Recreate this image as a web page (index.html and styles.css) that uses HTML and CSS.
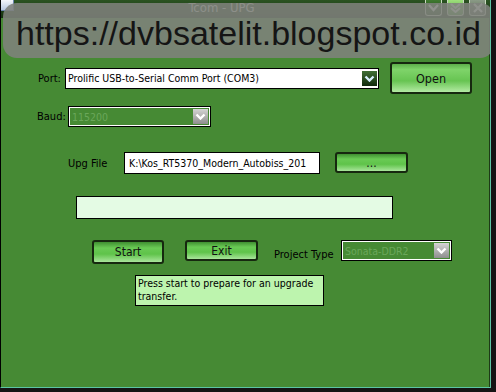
FILE: index.html
```html
<!DOCTYPE html>
<html lang="en">

<head>
    <meta charset="UTF-8">
    <title>Tcom - UPG</title>
    <link rel="stylesheet" href="styles.css">
</head>

<body>

    <div class="window">
        <div class="titlebar">
            <span class="sys-icon"></span>
            <span class="title">Tcom - UPG</span>
            <div class="caption-btns">
                <span class="cap cap-min">
                    <svg width="11" height="8" viewBox="0 0 11 8"><polyline points="1,1 5.5,6 10,1" fill="none" stroke="#fff" stroke-width="2.2"/></svg>
                </span>
                <span class="cap cap-max">
                    <svg width="11" height="10" viewBox="0 0 11 10"><polyline points="1,1 5.5,5 10,1" fill="none" stroke="#fff" stroke-width="2"/><polyline points="1,5 5.5,9 10,5" fill="none" stroke="#fff" stroke-width="2"/></svg>
                </span>
                <span class="cap cap-close">
                    <svg width="10" height="10" viewBox="0 0 10 10"><path d="M1 1 L9 9 M9 1 L1 9" stroke="#fff" stroke-width="2.2"/></svg>
                </span>
            </div>
        </div>

        <div class="content">
            <div class="row row-port">
                <label class="lbl lbl-port">Port:</label>
                <div class="combo combo-port">
                    <span class="combo-text">Prolific USB-to-Serial Comm Port (COM3)</span>
                    <span class="drop drop-dark">
                        <svg width="11" height="7" viewBox="0 0 11 7"><polyline points="1.5,1.5 5.5,5.5 9.5,1.5" fill="none" stroke="#d8f0ff" stroke-width="2.4"/></svg>
                    </span>
                </div>
                <button class="gbtn btn-open">Open</button>
            </div>

            <div class="row row-baud">
                <label class="lbl lbl-baud">Baud:</label>
                <div class="combo combo-off combo-baud">
                    <span class="combo-text">115200</span>
                    <span class="drop drop-gray">
                        <svg width="11" height="7" viewBox="0 0 11 7"><polyline points="1.5,1.5 5.5,5.5 9.5,1.5" fill="none" stroke="#fff" stroke-width="2.4"/></svg>
                    </span>
                </div>
            </div>

            <div class="row row-file">
                <label class="lbl lbl-file">Upg File</label>
                <div class="textbox">K:\Kos_RT5370_Modern_Autobiss_201</div>
                <button class="gbtn btn-browse">...</button>
            </div>

            <div class="row row-progress">
                <div class="progress"></div>
            </div>

            <div class="row row-actions">
                <button class="gbtn btn-start">Start</button>
                <button class="gbtn btn-exit">Exit</button>
                <label class="lbl lbl-type">Project Type</label>
                <div class="combo combo-off combo-type">
                    <span class="combo-text">Sonata-DDR2</span>
                    <span class="drop drop-gray">
                        <svg width="11" height="7" viewBox="0 0 11 7"><polyline points="1.5,1.5 5.5,5.5 9.5,1.5" fill="none" stroke="#fff" stroke-width="2.4"/></svg>
                    </span>
                </div>
            </div>

            <div class="row row-msg">
                <div class="message">Press start to prepare for an upgrade transfer.</div>
            </div>
        </div>

        <div class="watermark">https://dvbsatelit.blogspot.co.id</div>
    </div>

</body>

</html>
```

FILE: styles.css
```css
body {
    margin: 0;
    padding: 0;
    background-color: #141414;
    font-family: "DejaVu Sans Condensed", "Liberation Sans", sans-serif;
    font-size: 11px;
    color: #000;
}

.window {
    position: relative;
    width: 489px;
    height: 387px;
    background-color: #468a34;
    border-left: 1px solid #000;
    border-right: 1px solid #5cc4a4;
    border-bottom: 1px solid #5cc4a4;
    box-shadow: inset -1px 0 0 #1d3a16;
    overflow: hidden;
}

.titlebar {
    height: 18px;
    display: flex;
    align-items: flex-start;
    background: linear-gradient(#2b5322, #15300f);
}

.sys-icon {
    width: 12px;
    height: 10px;
    background: linear-gradient(#f4f6fa, #b8c8e0);
    border-right: 1px solid #6d86b0;
    border-bottom: 1px solid #6d86b0;
}

.title {
    flex: 1;
    text-align: center;
    color: #e8eee6;
    font-size: 13px;
    line-height: 16px;
    padding-left: 4px;
}

.caption-btns {
    display: flex;
    gap: 5px;
    margin-right: 4px;
}

.cap {
    width: 17px;
    height: 16px;
    box-sizing: border-box;
    border: 1px solid #c8d8c0;
    border-top: none;
    border-radius: 0 0 3px 3px;
    display: flex;
    align-items: center;
    justify-content: center;
}

.cap-min {
    background: linear-gradient(#3f7a30, #1c4314);
}

.cap-max {
    background: linear-gradient(#9ee07c, #4fa03a);
}

.cap-close {
    background: linear-gradient(#8a9a86, #56664f);
}

.content {
    display: flex;
    flex-direction: column;
}

.row {
    display: flex;
    align-items: center;
}

.lbl {
    white-space: nowrap;
}

/* combo boxes */
.combo {
    box-sizing: border-box;
    display: flex;
    align-items: center;
    justify-content: space-between;
    border: 1px solid #000;
    padding: 1px 1px 1px 2px;
}

.combo-text {
    white-space: nowrap;
    overflow: hidden;
    font-size: 10.5px;
}

.combo-port {
    width: 314px;
    height: 21px;
    background-color: #fff;
}

.combo-off {
    background-color: #468a34;
    border: 1px solid #000;
    box-shadow: inset 0 0 0 1px #fff;
    padding: 2px 2px 2px 3px;
}

.combo-off .combo-text {
    color: #6aa75a;
}

.drop {
    width: 15px;
    height: 15px;
    flex-shrink: 0;
    display: flex;
    align-items: center;
    justify-content: center;
}

.drop-dark {
    background: linear-gradient(#3f6e35, #122a0d);
}

.drop-gray {
    background: linear-gradient(#d4d4d4, #8e8e8e);
}

/* glossy green buttons */
.gbtn {
    box-sizing: border-box;
    font-family: inherit;
    font-size: 12px;
    color: #111;
    border: 2px solid #16280f;
    border-radius: 3px;
    padding: 0;
    background: linear-gradient(#3f8f31 0%, #6acb55 30%, #5fc34a 60%, #a9e59b 100%);
    cursor: pointer;
}

.row-port {
    margin-top: 44px;
    padding-left: 37px;
}

.lbl-port {
    width: 27px;
}

.btn-open {
    margin-left: 11px;
    width: 82px;
    height: 32px;
    font-size: 12.5px;
    background: linear-gradient(#5dae4a 0%, #7fd46a 20%, #67c452 60%, #b3eaa3 100%);
}

.row-baud {
    margin-top: 12px;
    padding-left: 36px;
}

.lbl-baud {
    width: 31px;
}

.combo-baud {
    width: 143px;
    height: 21px;
}

.row-file {
    margin-top: 25px;
    padding-left: 67px;
}

.lbl-file {
    width: 56px;
}

.textbox {
    box-sizing: border-box;
    width: 196px;
    height: 22px;
    line-height: 20px;
    padding-left: 4px;
    background-color: #fff;
    border: 1px solid #000;
    white-space: nowrap;
    overflow: hidden;
    font-size: 10.5px;
}

.btn-browse {
    margin-left: 15px;
    margin-bottom: 1px;
    width: 73px;
    height: 21px;
}

.row-progress {
    margin-top: 22px;
    padding-left: 75px;
}

.progress {
    box-sizing: border-box;
    width: 317px;
    height: 23px;
    background-color: #e4fbe4;
    border: 1px solid #000;
}

.row-actions {
    margin-top: 21px;
    padding-left: 91px;
    align-items: flex-start;
}

.btn-start {
    width: 72px;
    height: 24px;
}

.btn-exit {
    margin-left: 21px;
    width: 73px;
    height: 21px;
}

.lbl-type {
    margin-left: 16px;
    width: 67px;
    padding-top: 8px;
}

.combo-type {
    width: 111px;
    height: 21px;
}

.row-msg {
    margin-top: 11px;
    padding-left: 134px;
}

.message {
    box-sizing: border-box;
    width: 189px;
    height: 31px;
    padding: 1px 2px;
    line-height: 13px;
    background-color: #bdf4ae;
    border: 1px solid #000;
    font-size: 10.5px;
}

/* blog watermark pasted over the screenshot */
.watermark {
    position: absolute;
    left: 2px;
    top: 3px;
    width: 491px;
    height: 55px;
    border-radius: 14px;
    background-color: rgba(128, 130, 124, 0.88);
    font-family: "Liberation Sans", Arial, sans-serif;
    font-size: 34px;
    line-height: 60px;
    text-align: center;
    color: #151515;
}
```
